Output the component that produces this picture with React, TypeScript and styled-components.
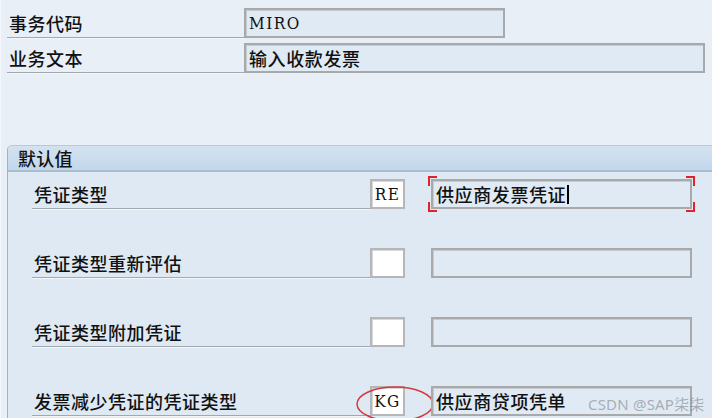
import React from "react";
import styled, { createGlobalStyle } from "styled-components";

const Global = createGlobalStyle`
  html, body { margin: 0; padding: 0; background: #e9eff6; overflow: hidden; }
  body { font-family: "Noto Sans CJK SC", "Noto Sans", sans-serif; color: #111; }
`;

const Screen = styled.div`
  width: 712px;
  height: 418px;
  box-sizing: border-box;
  padding: 8px 0 0 6px;
  border-left: 1px solid #f4f7fb;
  position: relative;
  overflow: hidden;
  background: #e9eff6;
`;

const TopForm = styled.div`
  display: grid;
  row-gap: 5px;
`;

const Row = styled.div`
  display: flex;
  align-items: center;
  height: 30px;
`;

const Label = styled.div<{ $w: number }>`
  width: ${(p) => p.$w}px;
  height: 30px;
  box-sizing: border-box;
  padding-left: 2px;
  display: flex;
  align-items: center;
  font-size: 18px;
  font-weight: 500;
  letter-spacing: 0.5px;
  border-bottom: 1px solid #a3a8ad;
  box-shadow: 0 1px 0 #f3f6fa;
  white-space: nowrap;
`;

const Field = styled.div<{ $w: number }>`
  width: ${(p) => p.$w}px;
  height: 30px;
  box-sizing: border-box;
  background: #dfeaf5;
  border: 2px solid #a7a9ab;
  box-shadow: inset 1px 1px 0 #c8ccd0;
  display: flex;
  align-items: center;
  padding-left: 3px;
  font-size: 18px;
  font-weight: 500;
  letter-spacing: 0.6px;
  white-space: nowrap;
`;

const Mono = styled.span`
  font-family: "DejaVu Serif Condensed", "DejaVu Serif", "Liberation Serif", serif;
  font-size: 17px;
  font-weight: 400;
  letter-spacing: 1.5px;
`;

const Group = styled.div`
  margin-top: 72px;
  border-left: 1px solid #9fb3c8;
  border-top: 1px solid #b8c9da;
  border-radius: 5px 0 0 0;
  background: #dee9f4;
  height: 400px;
`;

const GroupHeader = styled.div`
  height: 26px;
  box-sizing: border-box;
  padding-left: 10px;
  display: flex;
  align-items: center;
  font-size: 18px;
  font-weight: 500;
  letter-spacing: 0.3px;
  background: linear-gradient(#d3e2f1, #c3d7eb);
  border-bottom: 2px solid #a7bdd2;
  border-radius: 5px 0 0 0;
`;

const GroupBody = styled.div`
  padding: 7px 0 0 24px;
  display: grid;
  row-gap: 39px;
`;

const CodeBox = styled.div`
  position: relative;
  width: 35px;
  height: 30px;
  box-sizing: border-box;
  background: #ffffff;
  border: 2px solid #b4b6b8;
  box-shadow: inset 1px 1px 0 #d6d8da;
  display: flex;
  align-items: center;
  justify-content: center;
`;

const DescBox = styled(Field)`
  margin-left: 26px;
  position: relative;
  overflow: visible;
`;

const Corner = styled.span<{ $pos: "tl" | "tr" | "bl" | "br" }>`
  position: absolute;
  width: 7px;
  height: 8px;
  border-color: #e0222a;
  border-style: solid;
  border-width: 0;
  ${(p) => (p.$pos[0] === "t" ? "top: -5px; border-top-width: 2px;" : "bottom: -5px; border-bottom-width: 2px;")}
  ${(p) => (p.$pos[1] === "l" ? "left: -5px; border-left-width: 2px;" : "right: -5px; border-right-width: 2px;")}
`;

const Caret = styled.span`
  display: inline-block;
  width: 2px;
  height: 19px;
  background: #000;
  margin-left: 1px;
`;

const Ellipse = styled.svg`
  position: absolute;
  left: -16px;
  top: -3px;
  overflow: visible;
  pointer-events: none;
`;

const Watermark = styled.div`
  position: absolute;
  left: 587px;
  top: 393px;
  font-family: "Noto Sans", "Noto Sans CJK SC", sans-serif;
  font-size: 15px;
  color: rgba(120, 120, 120, 0.55);
  letter-spacing: 0.2px;
  white-space: nowrap;
`;

const rows = [
  { label: "凭证类型", code: "RE", desc: "供应商发票凭证", focus: true },
  { label: "凭证类型重新评估", code: "", desc: "" },
  { label: "凭证类型附加凭证", code: "", desc: "" },
  { label: "发票减少凭证的凭证类型", code: "KG", desc: "供应商贷项凭单", circle: true },
];

export default function App() {
  return (
    <>
      <Global />
      <Screen>
        <TopForm>
          <Row>
            <Label $w={237}>事务代码</Label>
            <Field $w={261}>
              <Mono>MIRO</Mono>
            </Field>
          </Row>
          <Row>
            <Label $w={237}>业务文本</Label>
            <Field $w={461}>输入收款发票</Field>
          </Row>
        </TopForm>
        <Group>
          <GroupHeader>默认值</GroupHeader>
          <GroupBody>
            {rows.map((r) => (
              <Row key={r.label}>
                <Label $w={338}>{r.label}</Label>
                <CodeBox>
                  <Mono>{r.code}</Mono>
                  {r.circle && (
                    <Ellipse width="78" height="36">
                      <ellipse cx="39" cy="19" rx="38" ry="17" fill="none" stroke="#d8393c" strokeWidth="1.5" />
                    </Ellipse>
                  )}
                </CodeBox>
                <DescBox $w={261}>
                  {r.desc}
                  {r.focus && (
                    <>
                      <Caret />
                      <Corner $pos="tl" />
                      <Corner $pos="tr" />
                      <Corner $pos="bl" />
                      <Corner $pos="br" />
                    </>
                  )}
                </DescBox>
              </Row>
            ))}
          </GroupBody>
        </Group>
        <Watermark>CSDN @SAP柒柒</Watermark>
      </Screen>
    </>
  );
}
